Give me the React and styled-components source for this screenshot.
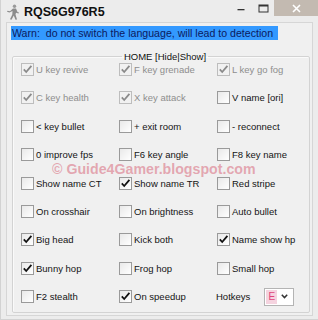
import React from "react";
import styled, { createGlobalStyle } from "styled-components";

const Global = createGlobalStyle`
  html, body { margin: 0; padding: 0; background: #ebebeb; }
  #root { width: 318px; height: 320px; }
`;

const Window = styled.div`
  width: 318px;
  height: 320px;
  box-sizing: border-box;
  background: #ececec;
  border-left: 1px solid #d2d2d2;
  border-bottom: 1px solid #d2d2d2;
  display: flex;
  flex-direction: column;
  font-family: "Liberation Sans", Arial, sans-serif;
  overflow: hidden;
`;

const TitleBar = styled.div`
  height: 22px;
  flex: none;
  display: flex;
  align-items: flex-start;
`;

const AppIcon = styled.div`
  width: 14px;
  height: 16px;
  margin: 4px 4px 0 5px;
  display: flex;
`;

const Title = styled.div`
  font-weight: bold;
  font-size: 12.5px;
  line-height: 14px;
  margin-top: 5px;
  color: #111;
  flex: 1;
`;

const CapButton = styled.div`
  width: ${(p) => p.$w}px;
  height: 16px;
  display: flex;
  align-items: center;
  justify-content: center;
  background: ${(p) => p.$bg || "transparent"};
`;

const Client = styled.div`
  flex: 1;
  margin: 0 5px 3px 5px;
  background: #f0f0f0;
  border: 1px solid #d6d6d6;
  padding: 3px 2px 2px 4px;
  display: flex;
  flex-direction: column;
  position: relative;
`;

const Warn = styled.div`
  align-self: flex-start;
  width: 267px;
  height: 14px;
  background: #3399ff;
  color: #0b1a5e;
  font-size: 10.6px;
  line-height: 14px;
  padding-left: 1px;
  white-space: pre;
  box-sizing: border-box;
`;

const Group = styled.fieldset`
  margin: 11px 0 0 1px;
  padding: 0 0 9px 8px;
  border: 1px solid #d3d3d3;
  border-radius: 2px;
  box-shadow: inset 1px 1px 0 #fafafa;
  min-width: 0;
  flex: 1;
  position: relative;
`;

const Legend = styled.legend`
  margin: 0 auto;
  padding: 0 2px;
  font-size: 9.5px;
  line-height: 11px;
  color: #111;
`;

const Grid = styled.div`
  display: grid;
  grid-template-columns: 98px 98px 1fr;
  grid-auto-rows: 13px;
  row-gap: 15.4px;
  margin-top: 1px;
`;

const Cell = styled.div`
  display: flex;
  align-items: center;
  gap: 2px;
  font-size: 9.5px;
  white-space: nowrap;
  color: ${(p) => (p.$disabled ? "#8e8e8e" : "#141414")};
`;

const Box = styled.div`
  width: 13px;
  height: 13px;
  box-sizing: border-box;
  flex: none;
  border: 1px solid ${(p) => (p.$disabled ? "#bdbdbd" : "#9a9a9a")};
  background: ${(p) =>
    p.$disabled ? "#f1f1f1" : "linear-gradient(135deg, #e9e9e9, #ffffff)"};
  display: flex;
  align-items: center;
  justify-content: center;
`;

const HotCell = styled.div`
  display: flex;
  align-items: center;
  font-size: 9.5px;
  color: #141414;
  margin-left: -1px;
  gap: 14px;
`;

const Select = styled.div`
  width: 30px;
  height: 18px;
  box-sizing: border-box;
  border: 1px solid #b4b4b4;
  background: #fff;
  display: flex;
  align-items: center;
  padding: 1px;
`;

const SelValue = styled.div`
  width: 11px;
  height: 14px;
  background: #f5d3df;
  color: #e0457a;
  font-size: 10px;
  line-height: 14px;
  text-align: center;
`;

const SelArrow = styled.div`
  flex: 1;
  display: flex;
  justify-content: center;
`;

const Watermark = styled.div`
  position: absolute;
  left: 39px;
  top: 99px;
  font-size: 14.2px;
  font-weight: bold;
  color: rgba(214, 92, 112, 0.5);
  white-space: nowrap;
  pointer-events: none;
`;

const Check = ({ color }) => (
  <svg width="11" height="11" viewBox="0 0 11 11">
    <path d="M1.8 5.4 L4.2 8 L9.4 1.8" fill="none" stroke={color} strokeWidth="1.8" />
  </svg>
);

const CheckItem = ({ label, checked, disabled }) => (
  <Cell $disabled={disabled}>
    <Box $disabled={disabled}>{checked && <Check color={disabled ? "#8a8a8a" : "#111"} />}</Box>
    {label}
  </Cell>
);

const items = [
  ["U key revive", 1, 1], ["F key grenade", 1, 1], ["L key go fog", 1, 1],
  ["C key health", 1, 1], ["X key attack", 1, 1], ["V name [ori]", 0, 0],
  ["< key bullet", 0, 0], ["+ exit room", 0, 0], ["- reconnect", 0, 0],
  ["0 improve fps", 0, 0], ["F6 key angle", 0, 0], ["F8 key name", 0, 0],
  ["Show name CT", 0, 0], ["Show name TR", 1, 0], ["Red stripe", 0, 0],
  ["On crosshair", 0, 0], ["On brightness", 0, 0], ["Auto bullet", 0, 0],
  ["Big head", 1, 0], ["Kick both", 0, 0], ["Name show hp", 1, 0],
  ["Bunny hop", 1, 0], ["Frog hop", 0, 0], ["Small hop", 0, 0],
  ["F2 stealth", 0, 0], ["On speedup", 1, 0],
];

export default function App() {
  return (
    <>
      <Global />
      <Window>
        <TitleBar>
          <AppIcon>
            <svg width="14" height="16" viewBox="0 0 14 16">
              <circle cx="8.5" cy="2.2" r="1.7" fill="#9a9a9a" />
              <path d="M7 4.5 L10 4.5 L11.5 8 L13 8.5 L12.5 9.5 L10 8.8 L9.5 10.5 L11 15.5 L9.5 15.8 L7.8 11.5 L5.5 15.8 L4 15.2 L6.3 10.5 L6.5 7 L3.5 8.5 L1 7.8 L1.5 6.8 L4 7.2 Z" fill="#8c8c8c" />
            </svg>
          </AppIcon>
          <Title>RQS6G976R5</Title>
          <CapButton $w={22}>
            <svg width="8" height="8" viewBox="0 0 8 8"><rect x="0.5" y="5" width="7" height="1.3" fill="#333" /></svg>
          </CapButton>
          <CapButton $w={22}>
            <svg width="11" height="9" viewBox="0 0 11 9"><rect x="1" y="1" width="9" height="7" fill="none" stroke="#333" strokeWidth="1" /><rect x="1" y="1" width="9" height="1.5" fill="#333" /></svg>
          </CapButton>
          <CapButton $w={44} $bg="#c3bab1">
            <svg width="9" height="9" viewBox="0 0 9 9"><path d="M1 1 L8 8 M8 1 L1 8" stroke="#fff" strokeWidth="1.6" /></svg>
          </CapButton>
        </TitleBar>
        <Client>
          <Warn>{"Warn:  do not switch the language, will lead to detection"}</Warn>
          <Group>
            <Legend>HOME [Hide|Show]</Legend>
            <Grid>
              {items.map(([l, c, d]) => (
                <CheckItem key={l} label={l} checked={!!c} disabled={!!d} />
              ))}
              <HotCell>
                Hotkeys
                <Select>
                  <SelValue>E</SelValue>
                  <SelArrow>
                    <svg width="7" height="5" viewBox="0 0 7 5"><path d="M0.8 0.8 L3.5 3.6 L6.2 0.8" fill="none" stroke="#333" strokeWidth="1.5" /></svg>
                  </SelArrow>
                </Select>
              </HotCell>
            </Grid>
            <Watermark>© Guide4Gamer.blogspot.com</Watermark>
          </Group>
        </Client>
      </Window>
    </>
  );
}
